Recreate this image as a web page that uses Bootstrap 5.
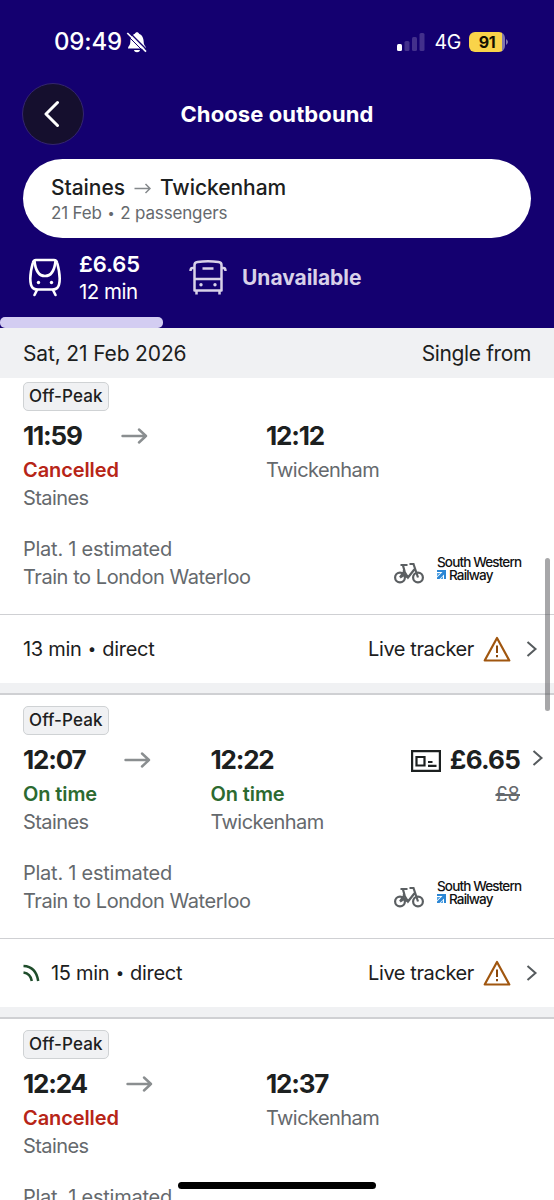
<!DOCTYPE html>
<html lang="en">
<head>
<meta charset="utf-8">
<meta name="viewport" content="width=device-width, initial-scale=1">
<title>Choose outbound</title>
<link rel="stylesheet" href="https://cdn.jsdelivr.net/npm/bootstrap@5.3.0/dist/css/bootstrap.min.css">
<style>
:root{--navy:#140070;--ink:#1c2020;--muted-ink:#65696d;--line:#cfd0d3;--panel:#f0f1f3}
body{font-family:Inter,"Liberation Sans",sans-serif;color:var(--ink);font-size:20px;line-height:28px;background:#fff}
svg{display:block;flex:none}
.screen{width:554px;height:1200px}
.app-head{height:328px;background:var(--navy);color:#fff}
.status{height:83px;padding:0 45px 0 54px}
.clock{font-size:24px;font-weight:500;letter-spacing:-.15px}
.net{font-size:19.500px;letter-spacing:-.3px;margin-left:9px}
.batt{width:36px;height:20px;border-radius:6px;background:linear-gradient(90deg,#f9d34a 33px,#8176ad 33px);font-size:16px;font-weight:700;color:#141000;letter-spacing:-.3px;line-height:20px}
.titlebar{height:62px}
.back-btn{width:62px;height:62px;left:22px;top:0;background:#150f2e;border:1px solid #34256f;color:#fff}
.page-title{font-size:22px;font-weight:700;line-height:62px;letter-spacing:.1px}
.trip{height:79px;margin:14px 23px 0;padding:15px 28px 0;border-radius:40px;background:#fff;color:var(--ink)}
.trip-route{font-size:21px;font-weight:500;line-height:28px;letter-spacing:-.05px}
.trip-route svg{margin:0 9px}
.trip-sub{font-size:17px;line-height:22px;letter-spacing:-.15px;color:var(--muted-ink)}
.dot{font-size:.75em;vertical-align:1.5px;margin:0 1px}
.tabs{height:79px}
.train{margin-right:15px}
.fare{font-size:22px;font-weight:600;letter-spacing:-.1px}
.dur{font-size:20.500px;letter-spacing:-.5px}
.bus{margin-left:49px;margin-right:15px}
.off{color:#d8d1e8;font-size:21px;font-weight:700;letter-spacing:-.05px}
.tab-bar{width:163px;height:11px;border-radius:5px;background:#d3cdf2}
.datebar{height:50px;padding:0 23px;background:var(--panel);font-size:21px;line-height:52px;letter-spacing:-.15px}
.from{letter-spacing:-.38px}
.journeys{height:822px}
.trip-card{height:324px;border-top:2px solid var(--line);padding-top:11px}
.first-card{margin-top:-9px;border-top-color:var(--panel)}
.peak{height:28px;margin-left:23px;border:1px solid #cfd2d4;border-radius:5px;background:var(--panel);padding:0 5px;font-size:17px;font-weight:500;line-height:27px;letter-spacing:.1px}
.row-body{height:203px;padding:6px 0 0 23px}
.dep{width:187.500px}
.wide .dep{width:243px}
.tm{font-size:26px;font-weight:700;line-height:38px;letter-spacing:-1.2px;padding-bottom:1px}
.to{margin:-2px 0 0 39px}
.st{font-weight:600;letter-spacing:-.1px}
.late{color:#b72517}.good{color:#2c6a30}
.soft{color:var(--muted-ink);letter-spacing:-.58px}
.extra{margin-top:23px;letter-spacing:-.44px}
.plat{letter-spacing:-.25px}
.price{font-size:26px;font-weight:700;line-height:38px;letter-spacing:-.8px;padding-bottom:1px;margin-left:9px}
.pc{margin:-6px 10px 0 12px}
.was{padding-right:34px;letter-spacing:0}
.op{padding-right:33px}
.bk{margin:27px 13px 0 0}
.swr{font-size:13.500px;font-weight:500;line-height:12.500px;color:#111;letter-spacing:-.85px;width:84px;margin-top:21px;white-space:nowrap}
.rw{margin-left:3px}
.foot{height:69px;border-top:1px solid var(--line);padding:0 16px 0 23px;letter-spacing:-.3px}
.track{letter-spacing:-.4px}
.wn{margin:0 15px 0 9px}
.live{margin-right:10px}
.gap-strip{height:11px;background:var(--panel)}
.scroller{width:5px;height:153px;left:545px;top:558px;border-radius:3px;background:rgba(80,80,84,.5)}
.home-bar{width:198px;height:7px;left:178px;top:1182px;border-radius:4px;background:#000}
</style>
</head>
<body>
<svg width="0" height="0" class="position-absolute" aria-hidden="true">
<symbol id="arr" viewBox="0 0 27 16"><path d="M1.500 8H25M18 1.500L25 8l-7 6.500" fill="none" stroke="#8a8e90" stroke-width="2.400" stroke-linecap="round" stroke-linejoin="round"/></symbol>
<symbol id="chev" viewBox="0 0 12 16"><path d="M1.500 1L9.500 8l-8 7" fill="none" stroke="#565b5e" stroke-width="2"/></symbol>
<symbol id="bike" viewBox="0 0 30 22"><g fill="none" stroke="#5b5f62" stroke-width="2.200"><circle cx="6" cy="15.500" r="4.900"/><circle cx="24" cy="15.500" r="4.900"/><path d="M6 15.500L10.500 9 9 3.500M6.500 3h7M9.500 8l4.500 7.500L21.500 6M24 15.500L19.500 2h-4M6 15.500l4-2.500 4 2.500"/></g></symbol>
<symbol id="warn" viewBox="0 0 28 26"><path d="M14 2L26.300 24.500H1.700z" fill="none" stroke="#a0560f" stroke-width="2.200" stroke-linejoin="round"/><path d="M14 9.500v7.500M14 19v2.200" stroke="#8a480c" stroke-width="2"/></symbol>
<symbol id="swrmark" viewBox="0 0 9 9"><path d="M0 0h9v9H7V4.500L2.500 9H0V7.500L5.500 2H0z" fill="#2b86d4"/><path d="M0 3h3.500L0 6.500zM6 9V6L3.500 9z" fill="#55a4e4"/></symbol>
</svg>

<main class="screen position-relative overflow-hidden">
<header class="app-head">
  <div class="status d-flex align-items-center">
    <span class="clock">09:49</span>
    <svg class="ms-1" width="22" height="22" viewBox="0 0 22 22"><path d="M2 17.500c0-2.400 2.300-2.800 2.300-6.500C4.300 6.500 6.500 3.400 9 2.700c.4-2 3.600-2 4 0 2.600.8 4.700 3.800 4.700 8.300 0 3.700 2.300 4.100 2.300 6.500zM8 18.900h6c-.4 3-5.600 3-6 0z" fill="#fff"/><path d="M2.800 .8L22 20" stroke="#140070" stroke-width="1.400"/><path d="M1.300 2L20 20.700" stroke="#fff" stroke-width="1.700"/><path d="M.3 3.300L18.800 21.800" stroke="#140070" stroke-width="1"/></svg>
    <svg class="ms-auto" width="28" height="20" viewBox="0 0 28 20"><rect y="12" width="5" height="7" rx="1.500" fill="#fff"/><g fill="#43308c"><rect x="7.500" y="9" width="5" height="10" rx="1.500"/><rect x="15" y="5" width="5" height="14" rx="1.500"/><rect x="22.500" y="1" width="5" height="18" rx="1.500"/></g></svg>
    <span class="net">4G</span>
    <span class="batt ms-2 text-center">91</span>
    <svg width="4" height="8" viewBox="0 0 4 8"><path d="M1 1q4 3 0 6z" fill="#8176ad"/></svg>
  </div>
  <div class="titlebar position-relative text-center">
    <button class="back-btn position-absolute rounded-circle p-0 d-flex align-items-center justify-content-center" aria-label="Back"><svg width="18" height="28" viewBox="0 0 18 28"><path d="M13.500 2.500L2 14l11.500 11.500" fill="none" stroke="#fff" stroke-width="3" stroke-linecap="round" stroke-linejoin="round"/></svg></button>
    <h1 class="page-title m-0">Choose outbound</h1>
  </div>
  <div class="trip">
    <div class="trip-route d-flex align-items-center"><span>Staines</span><svg width="17" height="11" viewBox="0 0 17 11"><path d="M.500 5.500H16M11.500 1L16 5.500 11.500 10" fill="none" stroke="#84888b" stroke-width="1.500"/></svg><span>Twickenham</span></div>
    <div class="trip-sub">21 Feb <span class="dot">•</span> 2 passengers</div>
  </div>
  <nav class="tabs d-flex align-items-center">
    <svg class="train ms-4" width="40" height="40" viewBox="0 0 40 40"><g fill="none" stroke="#fff" stroke-width="2.600" stroke-linecap="round"><path d="M12 2h18q2.500 0 3.200 3 2.500 9 2.500 15.500 0 7-2.500 9.500-1.500 1.500-4.700 1.500H13.500q-3.200 0-4.700-1.500Q6.300 27.500 6.300 20.500 6.300 14 8.800 5q.7-3 3.200-3z"/><path d="M10.500 3C11.500 13 15.500 18 21 18S30.500 13 31.500 3M13 32l-2.500 5M29 32l2.500 5"/></g><circle cx="14.500" cy="24.500" r="1.700" fill="#fff"/><circle cx="27.500" cy="24.500" r="1.700" fill="#fff"/></svg>
    <div><div class="fare">£6.65</div><div class="dur">12 min</div></div>
    <svg class="bus" width="38" height="36" viewBox="0 0 38 36"><g fill="none" stroke="#d8d1e8" stroke-width="2.500" stroke-linejoin="round"><path d="M5.500 30.500V5q0-2.500 3-2.900 10.500-1.500 21 0 3 .4 3 2.900v25.500zM5.500 19h27M5.500 8H3.500Q1.500 8 1.500 11M32.500 8h2q2 0 2 3M7.500 30.500V34.500M30.500 30.500V34.500M13.500 8.500h11"/></g><circle cx="12" cy="24.700" r="1.700" fill="#d8d1e8"/><circle cx="26" cy="24.700" r="1.700" fill="#d8d1e8"/></svg>
    <span class="off">Unavailable</span>
  </nav>
  <div class="tab-bar"></div>
</header>
<div class="datebar d-flex justify-content-between position-relative z-1"><span>Sat, 21 Feb 2026</span><span class="from">Single from</span></div>

<section class="journeys">
  <article class="trip-card first-card wide">
    <span class="peak d-table">Off-Peak</span>
    <div class="row-body">
      <div class="d-flex">
        <div class="dep"><div class="d-flex align-items-center"><span class="tm">11:59</span><svg class="to" width="27" height="16"><use href="#arr"/></svg></div><div class="st late">Cancelled</div><div class="soft">Staines</div></div>
        <div><div class="tm">12:12</div><div class="soft">Twickenham</div></div>
      </div>
      <div class="extra d-flex soft"><div><div class="plat">Plat. 1 estimated</div><div>Train to London Waterloo</div></div>
        <div class="op d-flex ms-auto"><svg class="bk" width="30" height="22"><use href="#bike"/></svg><div class="swr"><div>South Western</div><div class="d-flex align-items-center"><svg width="9" height="9"><use href="#swrmark"/></svg><span class="rw">Railway</span></div></div></div></div>
    </div>
    <div class="foot d-flex align-items-center"><span>13 min <span class="dot">•</span> direct</span><span class="track ms-auto">Live tracker</span><svg class="wn" width="28" height="26"><use href="#warn"/></svg><svg width="12" height="16"><use href="#chev"/></svg></div>
    <div class="gap-strip"></div>
  </article>
  <article class="trip-card">
    <span class="peak d-table">Off-Peak</span>
    <div class="row-body">
      <div class="d-flex">
        <div class="dep"><div class="d-flex align-items-center"><span class="tm">12:07</span><svg class="to" width="27" height="16"><use href="#arr"/></svg></div><div class="st good">On time</div><div class="soft">Staines</div></div>
        <div><div class="tm">12:22</div><div class="st good">On time</div><div class="soft">Twickenham</div></div>
        <div class="ms-auto text-end"><div class="d-flex align-items-center"><svg width="30" height="22" viewBox="0 0 30 22"><g fill="none" stroke="#1c2020" stroke-width="2.200"><path d="M1.100 1.100h27.800v19.800H1.100z"/><path d="M5.500 7h8v8.500h-8zM17 12h4.500M17 15.800h8.500"/></g></svg><span class="price">£6.65</span><svg class="pc" width="12" height="16"><use href="#chev"/></svg></div><div class="soft was"><s>£8</s></div></div>
      </div>
      <div class="extra d-flex soft"><div><div class="plat">Plat. 1 estimated</div><div>Train to London Waterloo</div></div>
        <div class="op d-flex ms-auto"><svg class="bk" width="30" height="22"><use href="#bike"/></svg><div class="swr"><div>South Western</div><div class="d-flex align-items-center"><svg width="9" height="9"><use href="#swrmark"/></svg><span class="rw">Railway</span></div></div></div></div>
    </div>
    <div class="foot d-flex align-items-center"><svg class="live" width="18" height="18" viewBox="0 0 18 18"><g fill="none" stroke="#1f4d2b" stroke-width="2.500"><path d="M.500 2Q13 2.500 15.200 17M.500 8.500Q7.500 9.500 8.800 17"/></g></svg><span>15 min <span class="dot">•</span> direct</span><span class="track ms-auto">Live tracker</span><svg class="wn" width="28" height="26"><use href="#warn"/></svg><svg width="12" height="16"><use href="#chev"/></svg></div>
    <div class="gap-strip"></div>
  </article>
  <article class="trip-card wide">
    <span class="peak d-table">Off-Peak</span>
    <div class="row-body">
      <div class="d-flex">
        <div class="dep"><div class="d-flex align-items-center"><span class="tm">12:24</span><svg class="to" width="27" height="16"><use href="#arr"/></svg></div><div class="st late">Cancelled</div><div class="soft">Staines</div></div>
        <div><div class="tm">12:37</div><div class="soft">Twickenham</div></div>
      </div>
      <div class="extra soft plat">Plat. 1 estimated</div>
    </div>
  </article>
</section>
<div class="scroller position-absolute z-2"></div>
<div class="home-bar position-absolute z-2"></div>
</main>
<script src="https://cdn.jsdelivr.net/npm/bootstrap@5.3.0/dist/js/bootstrap.bundle.min.js"></script>
</body>
</html>
